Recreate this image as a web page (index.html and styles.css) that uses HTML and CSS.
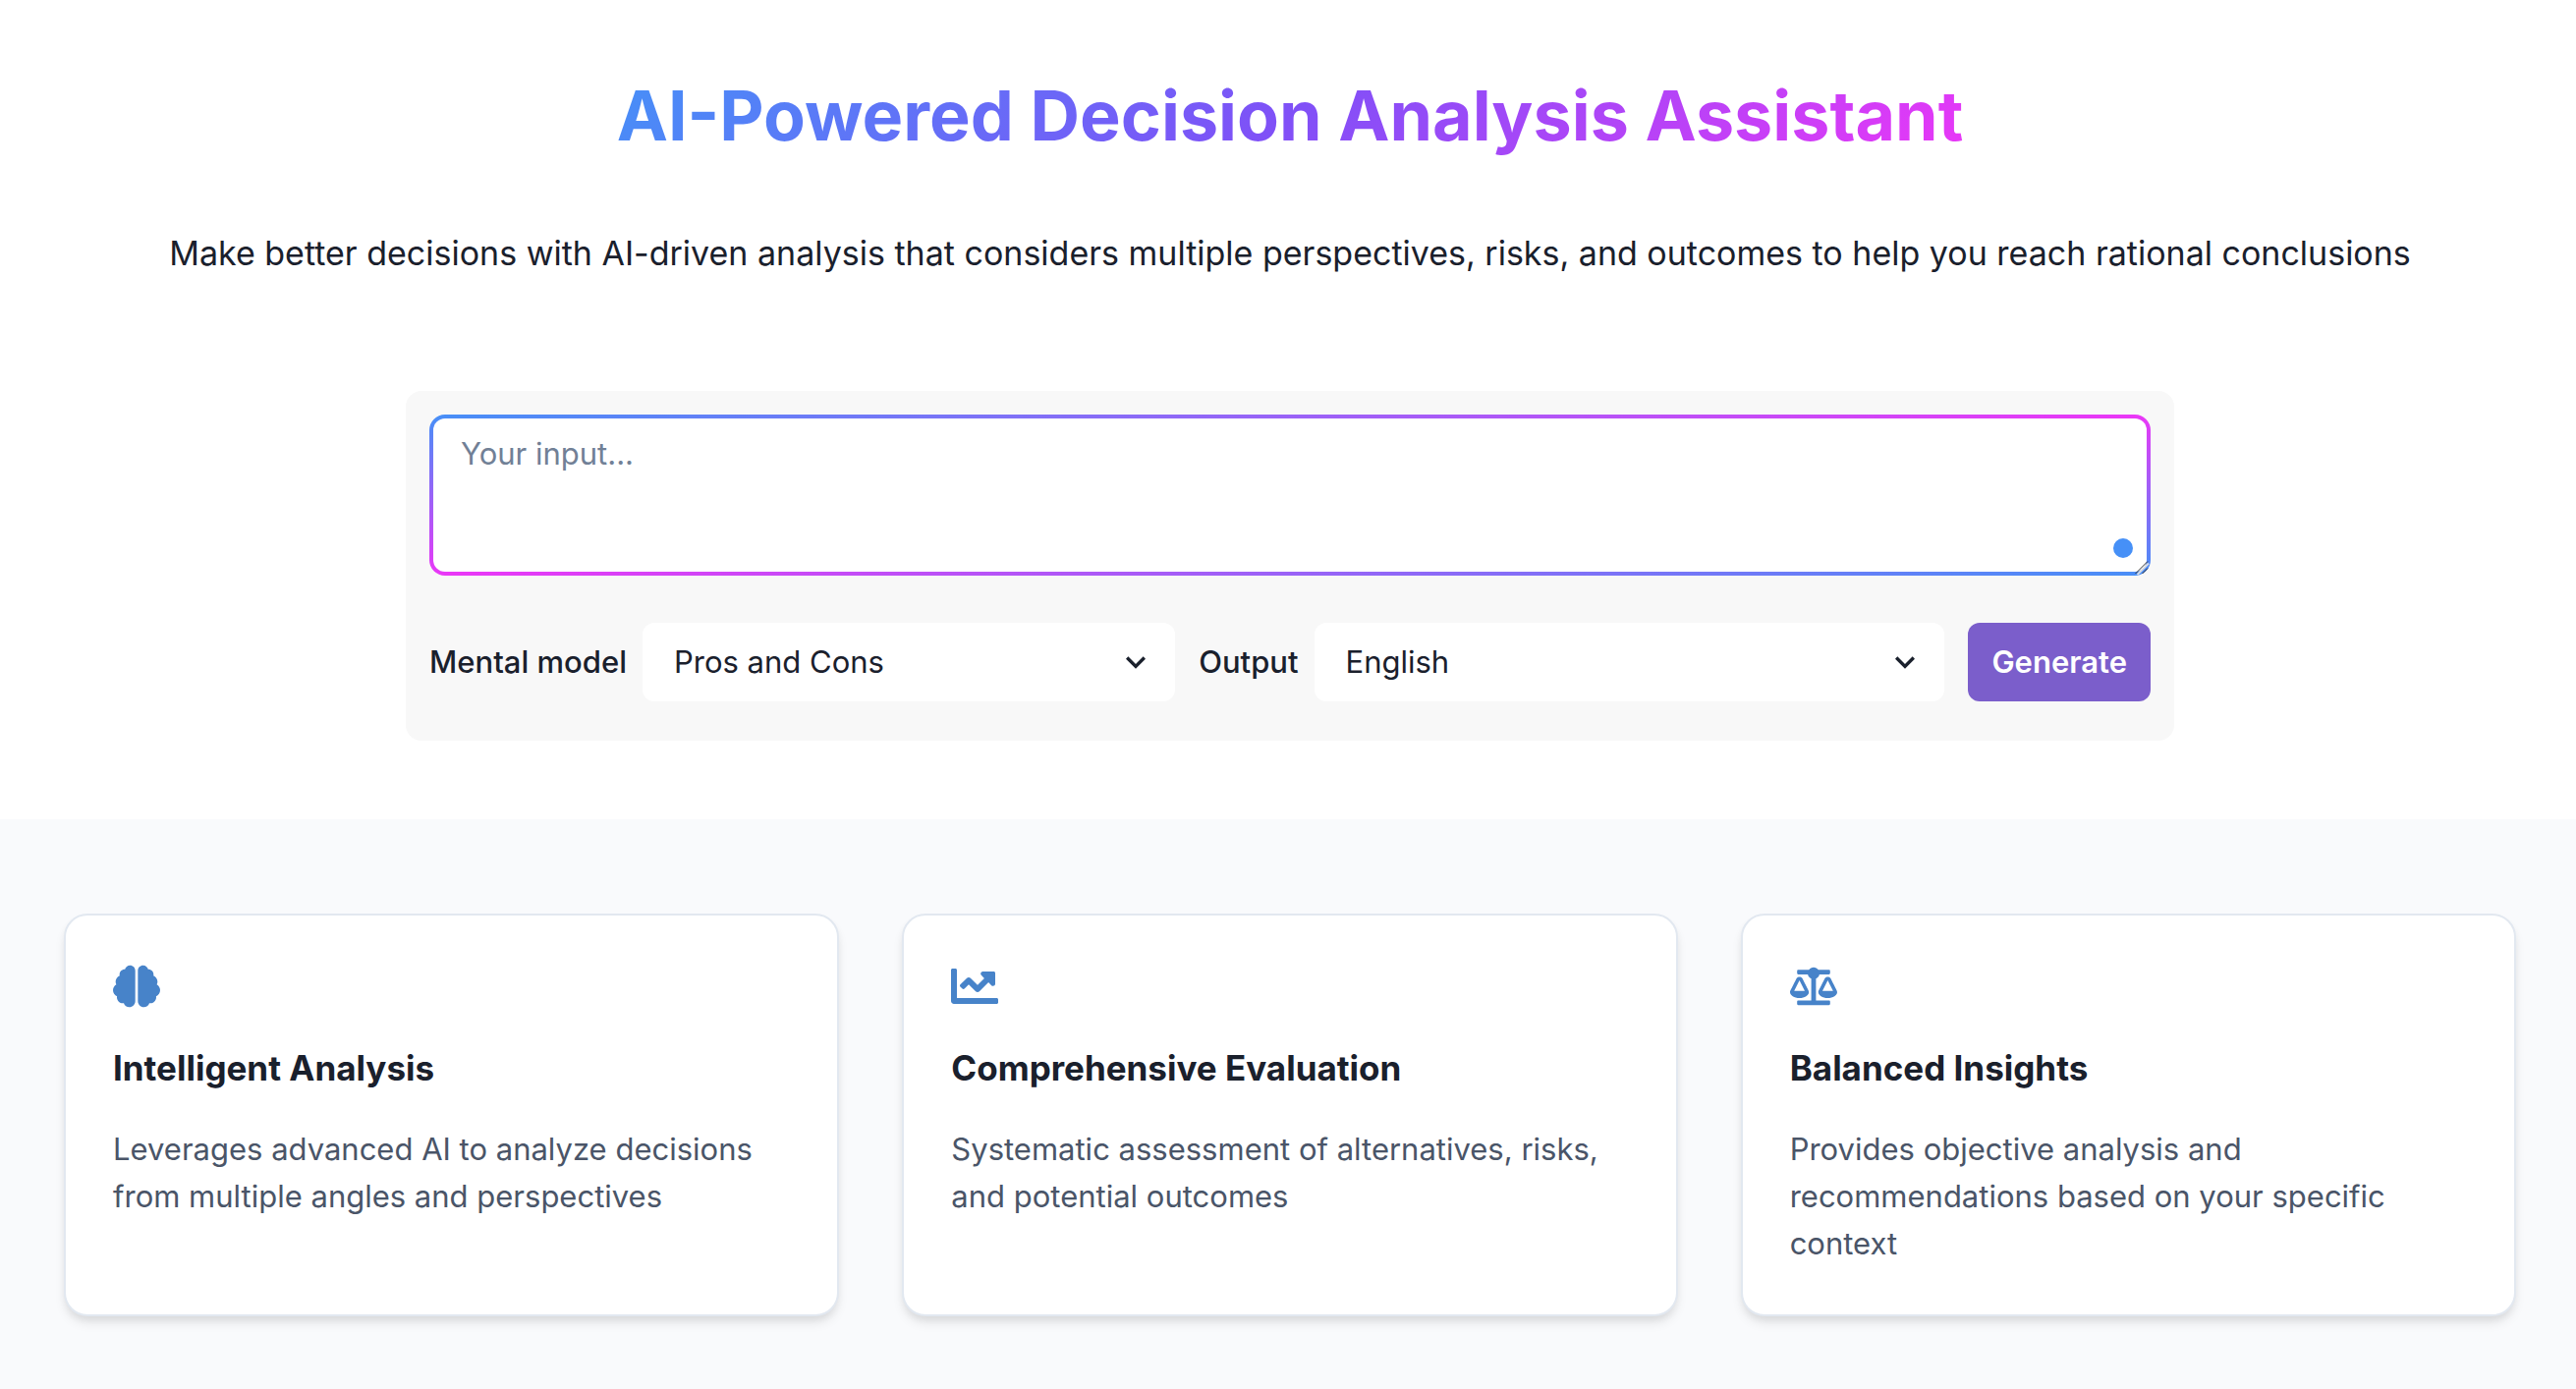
FILE: index.html
```html
<!DOCTYPE html>
<html lang="en">
<head>
<meta charset="utf-8">
<meta name="viewport" content="width=device-width, initial-scale=1">
<title>AI-Powered Decision Analysis Assistant</title>
<link rel="stylesheet" href="styles.css">
</head>
<body>
<main class="page">
  <section class="hero">
    <h1 class="hero-title">AI-Powered Decision Analysis Assistant</h1>
    <p class="hero-text">Make better decisions with AI-driven analysis that considers multiple perspectives, risks, and outcomes to help you reach rational conclusions</p>
    <form class="panel">
      <div class="input-wrap">
        <textarea class="input" aria-label="Your input" placeholder="Your input..."></textarea>
        <span class="dot"></span>
        <svg class="grip" viewBox="0 0 16 16" aria-hidden="true"><path class="grip-light" d="M3.5 15L15 3.5"/><path class="grip-dark" d="M1.500 14L14 1.500M8.500 14L14 8.500"/></svg>
      </div>
      <div class="controls">
        <div class="field">
          <label class="label" for="model">Mental model</label>
          <div class="select-wrap">
            <select class="select" id="model"><option>Pros and Cons</option></select>
            <svg class="chevron" viewBox="0 0 24 24" aria-hidden="true"><path d="M16.59 8.59L12 13.17 7.41 8.59 6 10l6 6 6-6z"/></svg>
          </div>
        </div>
        <div class="field">
          <label class="label" for="output">Output</label>
          <div class="select-wrap">
            <select class="select" id="output"><option>English</option></select>
            <svg class="chevron" viewBox="0 0 24 24" aria-hidden="true"><path d="M16.59 8.59L12 13.17 7.41 8.59 6 10l6 6 6-6z"/></svg>
          </div>
        </div>
        <button class="button" type="button">Generate</button>
      </div>
    </form>
  </section>
  <section class="features">
    <article class="card">
      <svg class="card-icon" viewBox="0 0 576 512" aria-hidden="true"><path d="M208 0c-29.9 0-54.7 20.5-61.8 48.2-.8 0-1.4-.2-2.2-.2-35.3 0-64 28.7-64 64 0 4.8.6 9.5 1.7 14C52.5 138 32 166.6 32 200c0 12.6 3.2 24.3 8.3 34.9C16.3 248.7 0 274.3 0 304c0 33.3 20.4 61.9 49.4 73.9-.9 4.6-1.4 9.3-1.4 14.1 0 39.8 32.2 72 72 72 4.1 0 8.1-.5 12-1.2 9.6 28.5 36.2 49.2 68 49.2 39.8 0 72-32.2 72-72V64c0-35.3-28.7-64-64-64zm368 304c0-29.7-16.3-55.3-40.3-69.1 5.2-10.6 8.3-22.3 8.3-34.9 0-33.4-20.5-62-49.7-74 1-4.5 1.7-9.2 1.7-14 0-35.3-28.7-64-64-64-.8 0-1.5.2-2.2.2C422.7 20.5 397.9 0 368 0c-35.3 0-64 28.6-64 64v376c0 39.8 32.2 72 72 72 31.8 0 58.4-20.7 68-49.2 3.9.7 7.9 1.2 12 1.2 39.8 0 72-32.2 72-72 0-4.8-.5-9.5-1.4-14.1 29-12 49.4-40.6 49.4-73.9z"/></svg>
      <h2 class="card-title">Intelligent Analysis</h2>
      <p class="card-text">Leverages advanced AI to analyze decisions from multiple angles and perspectives</p>
    </article>
    <article class="card">
      <svg class="card-icon" viewBox="0 0 512 512" aria-hidden="true"><path d="M496 384H64V80c0-8.84-7.16-16-16-16H16C7.16 64 0 71.16 0 80v336c0 17.67 14.33 32 32 32h464c8.84 0 16-7.16 16-16v-32c0-8.84-7.16-16-16-16zM464 96H345.94c-21.38 0-32.09 25.85-16.97 40.97l32.4 32.4L288 242.75l-73.37-73.37c-12.5-12.5-32.76-12.5-45.25 0l-68.69 68.69c-6.25 6.25-6.25 16.38 0 22.63l22.62 22.62c6.25 6.25 16.38 6.25 22.63 0L192 237.25l73.37 73.37c12.5 12.5 32.76 12.5 45.25 0l96-96 32.4 32.4c15.12 15.12 40.97 4.41 40.97-16.97V112c.01-8.84-7.15-16-15.99-16z"/></svg>
      <h2 class="card-title">Comprehensive Evaluation</h2>
      <p class="card-text">Systematic assessment of alternatives, risks, and potential outcomes</p>
    </article>
    <article class="card">
      <svg class="card-icon" viewBox="0 0 640 512" aria-hidden="true"><path d="M256 336h-.02c0-16.18 1.34-8.73-85.05-181.51-17.65-35.29-68.19-35.36-85.87 0C-2.06 328.75.02 320.33.02 336H0c0 44.18 57.31 80 128 80s128-35.82 128-80zM128 176l72 144H56l72-144zm511.98 160c0-16.18 1.34-8.73-85.05-181.51-17.65-35.29-68.19-35.36-85.87 0-87.12 174.26-85.04 165.84-85.04 181.51H384c0 44.18 57.31 80 128 80s128-35.82 128-80h-.02zM440 320l72-144 72 144H440zm88 128H352V153.25c23.51-10.29 41.16-31.48 46.39-57.25H528c8.84 0 16-7.16 16-16V48c0-8.84-7.16-16-16-16H383.64C369.04 12.68 346.09 0 320 0s-49.04 12.68-63.64 32H112c-8.84 0-16 7.16-16 16v32c0 8.84 7.16 16 16 16h129.61c5.23 25.76 22.87 46.96 46.39 57.25V448H112c-8.84 0-16 7.16-16 16v32c0 8.84 7.16 16 16 16h416c8.84 0 16-7.16 16-16v-32c0-8.84-7.16-16-16-16z"/></svg>
      <h2 class="card-title">Balanced Insights</h2>
      <p class="card-text">Provides objective analysis and recommendations based on your specific context</p>
    </article>
  </section>
</main>
</body>
</html>
```

FILE: styles.css
```css
* { box-sizing: border-box; }
body {
  margin: 0;
  color: #1a202c;
  background: #fff;
  font: 400 31px/48px Inter, "Liberation Sans", sans-serif;
}
h1, h2, p { margin: 0; }
.page { min-height: 100vh; display: flex; flex-direction: column; }
.hero {
  display: flex;
  flex-direction: column;
  align-items: center;
  padding: 70px 60px 80px 64px;
}
.hero-title {
  font-size: 70px;
  line-height: 96px;
  font-weight: 700;
  color: transparent;
  background: linear-gradient(135deg, #4690f7, #8050f7, #ea37f7);
  background-clip: text;
  -webkit-background-clip: text;
}
.hero-text { margin-top: 64px; font-size: 34px; line-height: 56px; text-align: center; }
.panel {
  width: 100%;
  max-width: 1800px;
  margin-top: 112px;
  padding: 24px 24px 40px;
  border-radius: 16px;
  background: #f8f8f8;
}
.input-wrap { position: relative; display: flex; }
.input {
  width: 100%;
  height: 164px;
  padding: 12px 28px;
  border: 4px solid transparent;
  border-radius: 16px;
  outline: 0;
  color: inherit;
  font: inherit;
  resize: vertical;
  background:
    linear-gradient(#fff, #fff) padding-box,
    linear-gradient(to bottom right, #4690f7, #ea37f7, #4690f7) border-box;
}
.input::placeholder { color: #718096; opacity: 1; }
.input::-webkit-resizer { background: transparent; }
.dot {
  position: absolute;
  right: 18px;
  bottom: 18px;
  width: 20px;
  height: 20px;
  border-radius: 50%;
  background: #4690f7;
}
.grip {
  position: absolute;
  right: 1px;
  bottom: 0;
  width: 16px;
  height: 16px;
  fill: none;
  pointer-events: none;
}
.grip-dark { stroke: #333; stroke-width: 1; }
.grip-light { stroke: #d8dce2; stroke-width: 2; }
.controls { display: flex; gap: 24px; margin-top: 48px; }
.field { flex: 1; display: flex; align-items: center; gap: 16px; }
.label { font-weight: 500; white-space: nowrap; }
.select-wrap { position: relative; flex: 1; }
.select {
  display: block;
  appearance: none;
  width: 100%;
  height: 80px;
  padding: 0 64px 0 32px;
  border: 0;
  border-radius: 12px;
  color: inherit;
  background: #fff;
  font: inherit;
}
.chevron {
  position: absolute;
  right: 20px;
  top: 20px;
  width: 40px;
  height: 40px;
  fill: currentColor;
  pointer-events: none;
}
.button {
  height: 80px;
  padding: 0 24px;
  border: 0;
  border-radius: 12px;
  color: #fff;
  background: #7b5ecb;
  font: inherit;
  font-weight: 600;
}
.features {
  flex: 1;
  display: grid;
  grid-template-columns: repeat(3, 1fr);
  align-content: start;
  gap: 64px;
  padding: 96px 61px 72px 65px;
  background: #f9fafc;
}
.card {
  padding: 48px;
  border: 2px solid #e2e8f0;
  border-radius: 24px;
  background: #fff;
  box-shadow: 0 8px 12px -2px rgba(0, 0, 0, .1), 0 4px 8px -2px rgba(0, 0, 0, .06);
}
.card-icon { display: block; width: 48px; height: 48px; fill: #4783c9; }
.card-title { margin-top: 32px; font-size: 35px; line-height: 54px; font-weight: 700; }
.card-text { margin-top: 32px; color: #4a5568; }
```
